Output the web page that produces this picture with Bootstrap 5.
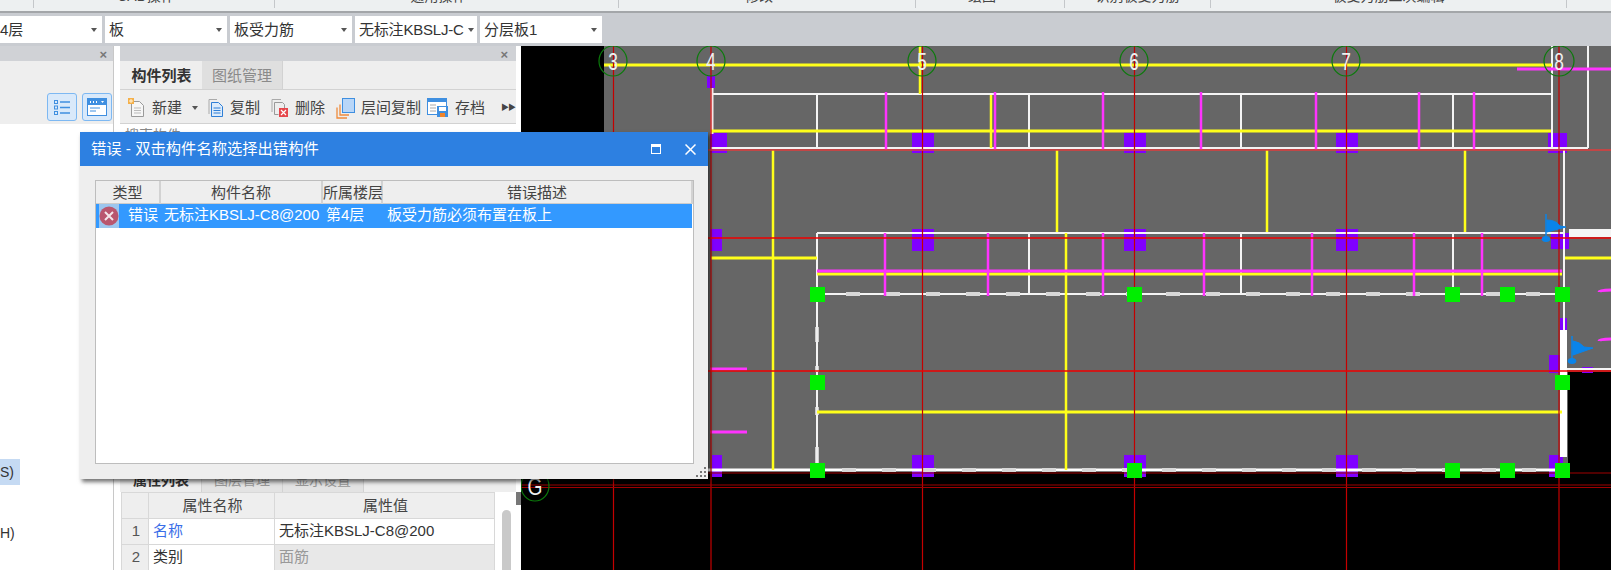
<!DOCTYPE html>
<html lang="zh">
<head>
  <meta charset="UTF-8">
  <meta name="viewport" content="width=device-width, initial-scale=1">
  <title>错误 - 双击构件名称选择出错构件</title>
  <link href="https://cdn.jsdelivr.net/npm/bootstrap@5.3.3/dist/css/bootstrap.min.css" rel="stylesheet">
  <style>
    html, body { height: 570px; overflow: hidden; }
    body { font-family: "Liberation Sans", "Noto Sans CJK SC", sans-serif; font-size: 15px; color: #333; background: #fff; }

    /* ribbon labels are cut off at the window top */
    .ribbon-strip { height: 13px; background: #edf0f1; border-bottom: 2px solid #a3a6a9; overflow: hidden; }
    .ribbon-group { height: 8px; border-right: 1px solid #c4c7ca; text-align: center; line-height: 14px; font-size: 14px; color: #444; flex: none; }
    .ribbon-group span { display: block; margin-top: -11px; }

    .combo-strip { height: 33px; background: #c9ccd1; padding: 3px 0; gap: 3px; }
    .combo-box { height: 27px; width: 122px; background: #fff; padding: 0 5px 0 4px; font-size: 15px; line-height: 27px; color: #333; flex: none; }
    .combo-box.first-box { width: 102px; padding-left: 0; }
    .combo-box.narrow-text { letter-spacing: -.2px; padding-right: 3px; }
    .combo-caret, .tool-caret { width: 0; height: 0; border-left: 3.5px solid transparent; border-right: 3.5px solid transparent; border-top: 4px solid #555; flex: none; }

    .work-row { height: 524px; }
    .side-panel { width: 114px; border-right: 1px solid #c8c8c8; flex: none; margin-right: 6px; position: relative; }
    .comp-panel { width: 396px; flex: none; background: #fff; }
    .panel-head { height: 15px; background: #d0d2d6; position: relative; }
    .panel-close { position: absolute; right: 8px; top: 2px; font-size: 13px; line-height: 14px; color: #777; font-weight: bold; }
    .side-panel .panel-close { right: 6px; }
    .side-tools { height: 63px; background: #eee; padding: 32px 1px 0 0; gap: 5px; }
    .view-btn { width: 30px; height: 28px; background: #d9e9fa; border: 1px solid #7db8f2; border-radius: 3px; }
    .picked-row { position: absolute; left: 0; top: 413px; width: 20px; height: 26px; background: #c5daf3; font-size: 14px; line-height: 26px; color: #333; }
    .cut-row { position: absolute; left: 0; top: 474px; font-size: 14px; line-height: 26px; color: #333; }

    .tab-strip { height: 29px; background: #eee; border-bottom: 1px solid #d2d2d2; padding-left: 1px; }
    .tab-item { width: 81px; text-align: center; font-size: 15px; line-height: 29px; color: #333; font-weight: bold; }
    .tab-item.off { background: #dfdfdf; color: #8a8a8a; font-weight: normal; border-right: 1px solid #d2d2d2; }
    .tool-strip { height: 34px; background: #eee; padding: 3px 0 0 8px; border-bottom: 1px solid #d2d2d2; }
    .tool-btn { font-size: 15px; color: #444; white-space: nowrap; gap: 6px; flex: none; }
    .more-arrows { color: #444; font-size: 8px; letter-spacing: -1px; margin-left: 16px; }
    .search-row { height: 28px; padding: 1px 0 0 5px; font-size: 14px; color: #888; }
    .comp-space { height: 318px; }

    .prop-tabs { height: 22px; background: #eee; padding-left: 1px; overflow: hidden; }
    .prop-tab { width: 81px; height: 22px; text-align: center; font-size: 14px; line-height: 20px; color: #999; background: #e3e3e3; border-right: 1px solid #d2d2d2; }
    .prop-tab.on { background: #eee; color: #333; font-weight: bold; }
    .prop-wrap { padding-left: 1px; position: relative; }
    .prop-table { width: 374px; table-layout: fixed; margin: 0; font-size: 15px; --bs-table-bg: transparent; }
    .prop-table th, .prop-table td { height: 26px; padding: 0 2px 0 4px; border: 1px solid #d8d8d8; line-height: 24px; font-weight: normal; white-space: nowrap; color: #333; }
    .prop-table th { background: #eee; text-align: center; color: #444; }
    .prop-table .row-no { background: #eee; text-align: center; color: #555; }
    .prop-table .name-link { color: #3a6ee8; }
    .prop-table .dim-cell { background: #e8e8e8; color: #999; }
    .prop-scroll { position: absolute; left: 382px; top: 18px; width: 9px; height: 80px; background: #c9c9c9; border-radius: 5px; }
    .prop-edge { position: absolute; left: 396px; top: 0; width: 5px; height: 13px; background: #777; }

    .cad-view { display: block; flex: none; background: #000; }
    .cad-view text { font-family: "Liberation Sans", sans-serif; font-size: 24px; fill: #f0f0f0; text-anchor: middle; }

    .err-dialog { position: absolute; left: 80px; top: 132px; width: 628px; height: 347px; background: #eee; box-shadow: 2px 3px 4px rgba(0,0,0,.55); }
    .err-title { height: 34px; background: #2d80e1; color: #fff; padding: 0 12px 0 11px; font-size: 15.3px; }
    .err-title svg { flex: none; }
    .err-body { position: absolute; left: 15px; top: 48px; width: 599px; height: 284px; background: #fff; border: 1px solid #bdbdbd; }
    .err-table { width: 100%; table-layout: fixed; margin: 0; font-size: 15px; --bs-table-bg: transparent; }
    .err-table th { height: 22px; padding: 0; background: #eee; border-right: 2px solid #d2d2d2; border-bottom: 1px solid #ccc; text-align: center; line-height: 20px; font-weight: normal; color: #444; white-space: nowrap; }
    .err-table td { height: 25px; padding: 0; background: #39f; color: #fff; border: 0; white-space: nowrap; }
    .type-cell { display: flex; align-items: center; }
    .err-mark { width: 20px; height: 24px; margin: 0 9px 0 3px; background: #9cc6ee; display: flex; align-items: center; flex: none; }
    .desc-cell { padding-left: 5px !important; }
    .grip-dots { position: absolute; right: 1px; bottom: 1px; }
  </style>
</head>
<body>

<div class="ribbon-strip d-flex">
  <div class="ribbon-group" style="width:34px"></div>
  <div class="ribbon-group" style="width:241px"><span class="pe-3">CAD操作</span></div>
  <div class="ribbon-group" style="width:344px"><span class="pe-3">通用操作</span></div>
  <div class="ribbon-group" style="width:297px"><span class="pe-3">修改</span></div>
  <div class="ribbon-group" style="width:149px"><span class="pe-3">绘图</span></div>
  <div class="ribbon-group" style="width:146px"><span>识别板受力筋</span></div>
  <div class="ribbon-group" style="width:356px"><span>板受力筋二次编辑</span></div>
</div>

<div class="combo-strip d-flex">
  <div class="combo-box first-box d-flex justify-content-between align-items-center"><span>4层</span><i class="combo-caret"></i></div>
  <div class="combo-box d-flex justify-content-between align-items-center"><span>板</span><i class="combo-caret"></i></div>
  <div class="combo-box d-flex justify-content-between align-items-center"><span>板受力筋</span><i class="combo-caret"></i></div>
  <div class="combo-box narrow-text d-flex justify-content-between align-items-center"><span>无标注KBSLJ-C</span><i class="combo-caret"></i></div>
  <div class="combo-box d-flex justify-content-between align-items-center"><span>分层板1</span><i class="combo-caret"></i></div>
</div>

<div class="work-row d-flex">
  <!-- left panel, mostly behind the dialog -->
  <div class="side-panel">
    <div class="panel-head"><span class="panel-close">×</span></div>
    <div class="side-tools d-flex justify-content-end align-items-start">
      <div class="view-btn d-flex align-items-center justify-content-center">
        <svg width="18" height="17" viewBox="0 0 18 17"><g fill="none" stroke="#3f8fe0" stroke-width="1"><rect x="1.5" y="1.5" width="3" height="3"/><rect x="1.5" y="7" width="3" height="3"/><rect x="1.5" y="12.5" width="3" height="3"/></g><g stroke="#3f8fe0" stroke-width="1.4"><path d="M7 3h10M7 8.500h10M7 14h10"/></g></svg>
      </div>
      <div class="view-btn d-flex align-items-center justify-content-center">
        <svg width="20" height="18" viewBox="0 0 20 18"><rect x=".5" y=".5" width="19" height="17" fill="#fff" stroke="#3f8fe0"/><rect x="1" y="1" width="18" height="6" fill="#3f8fe0"/><path d="M3 3h1v2H3zM6 3h1v2H6zM9 3h1v2H9zM14 3h3l-1.500 2z" fill="#fff"/><path d="M3 10h10M3 13h6" stroke="#3f8fe0"/></svg>
      </div>
    </div>
    <div class="picked-row">S)</div>
    <div class="cut-row">H)</div>
  </div>

  <!-- component list and property list -->
  <div class="comp-panel">
    <div class="panel-head"><span class="panel-close">×</span></div>
    <div class="tab-strip d-flex">
      <div class="tab-item">构件列表</div>
      <div class="tab-item off">图纸管理</div>
    </div>
    <div class="tool-strip d-flex align-items-center">
      <div class="tool-btn d-flex align-items-center">
        <svg width="18" height="20" viewBox="0 0 18 20"><path d="M3.500 3.500h8l4 4v11h-12z" fill="#f6f6f6" stroke="#9a9a9a"/><path d="M6 10h7M6 12.500h7M6 15h7" stroke="#bbb"/><rect x="0" y="0" width="6" height="6" fill="#f5b04a"/><path d="M3 1v4M1 3h4" stroke="#fff3d8"/></svg>
        <span>新建</span><i class="tool-caret ms-1"></i>
      </div>
      <div class="tool-btn d-flex align-items-center" style="margin-left:10px">
        <svg width="16" height="20" viewBox="0 0 16 20"><path d="M1 16V1.500h8" fill="none" stroke="#aaa"/><path d="M3.500 4.500h7l4 4v10h-11z" fill="#dcebfb" stroke="#2f7fd6"/><path d="M5.500 10h7M5.500 12.500h7M5.500 15h7" stroke="#2f7fd6"/></svg>
        <span>复制</span>
      </div>
      <div class="tool-btn d-flex align-items-center" style="margin-left:11px">
        <svg width="18" height="20" viewBox="0 0 18 20"><path d="M1 14V1.500h9" fill="none" stroke="#aaa"/><path d="M3.500 4.500h8l2 2v4M3.500 4.500v12h4" fill="none" stroke="#999"/><rect x="8" y="10" width="9" height="9" fill="#e6474c"/><path d="M10 12l5 5M15 12l-5 5" stroke="#fff" stroke-width="1.200"/></svg>
        <span>删除</span>
      </div>
      <div class="tool-btn d-flex align-items-center" style="margin-left:11px">
        <svg width="19" height="21" viewBox="0 0 19 21"><rect x="6.500" y=".5" width="12" height="14" fill="#b8d6f8" stroke="#3f8fe0"/><path d="M4 6.500V17h9M1 9.500V20h10" fill="none" stroke="#ef8b3c" stroke-width="1.300"/></svg>
        <span>层间复制</span>
      </div>
      <div class="tool-btn d-flex align-items-center" style="margin-left:6px">
        <svg width="22" height="20" viewBox="0 0 22 20"><rect x=".5" y=".5" width="19" height="16" fill="#fff" stroke="#3f8fe0"/><rect x="1" y="1" width="18" height="3" fill="#3f8fe0"/><path d="M3 7h6M3 10h6M3 13h6" stroke="#aaa"/><rect x="10" y="8" width="11" height="11" fill="#3f8fe0"/><rect x="12" y="9" width="7" height="4" fill="#fff"/><rect x="13" y="15" width="5" height="4" fill="#f0852d"/></svg>
        <span>存档</span>
      </div>
      <span class="more-arrows">▶▶</span>
    </div>
    <div class="search-row d-flex justify-content-between">
      <span>搜索构件...</span>
    </div>
    <div class="comp-space"></div>
    <div class="prop-tabs d-flex">
      <div class="prop-tab on">属性列表</div>
      <div class="prop-tab">图层管理</div>
      <div class="prop-tab">显示设置</div>
    </div>
    <div class="prop-wrap">
      <table class="table prop-table">
        <colgroup><col style="width:27px"><col style="width:126px"><col></colgroup>
        <thead><tr><th></th><th>属性名称</th><th>属性值</th></tr></thead>
        <tbody>
          <tr><td class="row-no">1</td><td class="name-link">名称</td><td>无标注KBSLJ-C8@200</td></tr>
          <tr><td class="row-no">2</td><td>类别</td><td class="dim-cell">面筋</td></tr>
        </tbody>
      </table>
      <div class="prop-scroll"></div>
      <div class="prop-edge"></div>
    </div>
  </div>

  <div class="flex-shrink-0" style="width:5px"></div>

  <!-- drawing canvas, coordinates are page pixels -->
  <svg class="cad-view" width="1090" height="524" viewBox="521 46 1090 524">
    <path d="M604 46H1611V372H1568V470H604z" fill="#666"/>

    <!-- purple columns -->
    <g fill="#8000ff">
      <path d="M707 76h8v12h-8zM710 133h17v20h-17zM912 133h22v20h-22zM1124 133h22v20h-22zM1336 133h22v20h-22zM1548 133h19v20h-19z"/>
      <path d="M710 229h12v22h-12zM912 229h22v22h-22zM1124 229h22v22h-22zM1336 229h22v22h-22zM1551 233h18v16h-18z"/>
      <path d="M712 455h10v22h-10zM912 455h22v22h-22zM1124 455h22v22h-22zM1336 455h22v22h-22zM1549 455h14v22h-14z"/>
      <path d="M1560 318h7v12h-7zM1549 355h12v18h-12zM1582 367h11v6h-11z"/>
    </g>

    <!-- white walls -->
    <g stroke="#f4f4f4" fill="none" stroke-width="2">
      <path d="M711 94H1552M1552 46V148M1588 46V148M711 148H1588" />
      <path d="M817 94V148M1029 94V148M1241 94V148M1453 94V148"/>
      <path d="M817 233H1564M817 233V470M1564 150V330"/>
      <path d="M1029 233V294M1241 233V294M1453 233V294"/>
      <path d="M817 294H1564"/>
      <path d="M1567 369H1611"/>
    </g>
    <path d="M712 88V134" stroke="#f6e6e6" stroke-width="3"/>
    <path d="M604 470H1564" stroke="#fff" stroke-width="3"/>
    <path d="M1563.500 330V457" stroke="#fff" stroke-width="7"/>
    <path d="M1569 233H1611" stroke="#f4f4f4" stroke-width="8"/>
    <!-- lighter dashes sitting on the walls -->
    <path d="M846 294H1564" stroke="#d8d8d8" stroke-width="4" stroke-dasharray="14 26"/>
    <path d="M842 470H1564" stroke="#d8d8d8" stroke-width="4" stroke-dasharray="14 26"/>
    <path d="M817 327V342M817 366V372M817 407V415M817 447V463" stroke="#eee" stroke-width="3.500"/>

    <!-- yellow bars -->
    <g stroke="#ffff1a" fill="none">
      <path d="M604 65H1552M711 131H1551M711 258H817M1565 258H1611M817 274H1562M817 412H1562" stroke-width="3"/>
      <path d="M920 46V94M991 95V148M773 150V470M1057 150V232M1267 150V232M1465 150V232M1066 233V470" stroke-width="2.500"/>
    </g>

    <!-- magenta bars -->
    <g stroke="#ff33ff" fill="none">
      <path d="M1517 69H1611M817 271H1562" stroke-width="3"/>
      <path d="M886 92V150M995 92V150M1103 92V150M1201 92V150M1316 92V150M1419 92V150M1474 92V150" stroke-width="2.500"/>
      <path d="M885 233V296M988 233V296M1103 233V296M1204 233V296M1312 233V296M1414 233V296M1482 233V296" stroke-width="2.500"/>
      <path d="M710 369H747M710 432H747" stroke-width="3"/>
      <path d="M1599 292Q1599 290 1611 290M1599 341Q1599 339 1611 339" stroke-width="3"/>
    </g>

    <!-- axis lines -->
    <g stroke="#c40000" fill="none" stroke-width="1.200">
      <path d="M613.500 46V570M711 46V570M922.500 46V570M1134.500 46V570M1346.500 46V570M1559 46V570"/>
    </g>
    <path d="M708 150H1611" stroke="#e23c3c" stroke-width="1.500"/>
    <path d="M521 238H1611M708 371H1611" stroke="#f00000" stroke-width="1.500"/>
    <path d="M521 473H1611M521 485H1611M521 487.500H1611" stroke="#a00000" stroke-width="1"/>

    <!-- green points -->
    <g fill="#00ee00">
      <path d="M810 287h15v15h-15zM1127 287h15v15h-15zM1445 287h15v15h-15zM1500 287h15v15h-15zM1555 287h15v15h-15z"/>
      <path d="M810 375h15v15h-15zM1555 375h15v15h-15z"/>
      <path d="M810 463h15v15h-15zM1127 463h15v15h-15zM1445 463h15v15h-15zM1500 463h15v15h-15zM1555 463h15v15h-15z"/>
    </g>

    <!-- axis bubbles -->
    <g fill="none" stroke="#0b7a0b" stroke-width="1.200">
      <ellipse cx="613" cy="61" rx="14" ry="15"/>
      <ellipse cx="711" cy="61" rx="14" ry="15"/>
      <ellipse cx="922" cy="61" rx="14" ry="15"/>
      <ellipse cx="1134" cy="61" rx="14" ry="15"/>
      <ellipse cx="1346" cy="61" rx="14" ry="15"/>
      <ellipse cx="1559" cy="61" rx="15" ry="15"/>
      <ellipse cx="535" cy="486" rx="14" ry="15"/>
    </g>
    <text transform="translate(613 70) scale(.72 1)">3</text>
    <text transform="translate(711 70) scale(.72 1)">4</text>
    <text transform="translate(922 70) scale(.72 1)">5</text>
    <text transform="translate(1134 70) scale(.72 1)">6</text>
    <text transform="translate(1346 70) scale(.72 1)">7</text>
    <text transform="translate(1559 70) scale(.72 1)">8</text>
    <text transform="translate(535 495) scale(.8 1)">G</text>

    <!-- blue flags -->
    <g fill="#0a84ea" stroke="#0a84ea">
      <path d="M1546 214V240" stroke-width="1.500"/>
      <path d="M1547 220Q1556 220 1560 226L1566 227L1547 232z" stroke-width="1"/>
      <ellipse cx="1546" cy="239" rx="4" ry="2.500"/>
      <path d="M1572 336V361" stroke-width="1.500"/>
      <path d="M1573 341Q1580 342 1584 347L1593 348L1573 355z" stroke-width="1"/>
      <ellipse cx="1572" cy="361" rx="4" ry="2.500"/>
    </g>
  </svg>
</div>

<!-- error dialog on top of everything -->
<div class="err-dialog">
  <div class="err-title d-flex align-items-center">
    <span class="flex-grow-1">错误 - 双击构件名称选择出错构件</span>
    <svg class="me-4" width="10" height="10" viewBox="0 0 10 10"><rect x=".5" y=".5" width="9" height="9" fill="none" stroke="#fff"/><path d="M0 2h10" stroke="#fff" stroke-width="2"/></svg>
    <svg width="11" height="11" viewBox="0 0 11 11"><path d="M.5.5l10 10M10.500.5l-10 10" stroke="#fff" stroke-width="1.500"/></svg>
  </div>
  <div class="err-body">
    <table class="table err-table">
      <colgroup><col style="width:64px"><col style="width:162px"><col style="width:60px"><col></colgroup>
      <thead><tr><th>类型</th><th>构件名称</th><th>所属楼层</th><th>错误描述</th></tr></thead>
      <tbody>
        <tr>
          <td><div class="type-cell"><span class="err-mark"><svg width="20" height="20" viewBox="0 0 20 20"><circle cx="10" cy="10" r="9.500" fill="#b9566e"/><path d="M6 6l8 8M14 6l-8 8" stroke="#f4e6ea" stroke-width="2"/></svg></span>错误</div></td>
          <td class="ps-1">无标注KBSLJ-C8@200</td>
          <td class="ps-1">第4层</td>
          <td class="desc-cell">板受力筋必须布置在板上</td>
        </tr>
      </tbody>
    </table>
  </div>
  <svg class="grip-dots" width="12" height="12" viewBox="0 0 12 12" fill="#777"><path d="M9 1h2v2H9zM5 5h2v2H5zM9 5h2v2H9zM1 9h2v2H1zM5 9h2v2H5zM9 9h2v2H9z"/></svg>
</div>

<script src="https://cdn.jsdelivr.net/npm/bootstrap@5.3.3/dist/js/bootstrap.bundle.min.js"></script>
</body>
</html>
